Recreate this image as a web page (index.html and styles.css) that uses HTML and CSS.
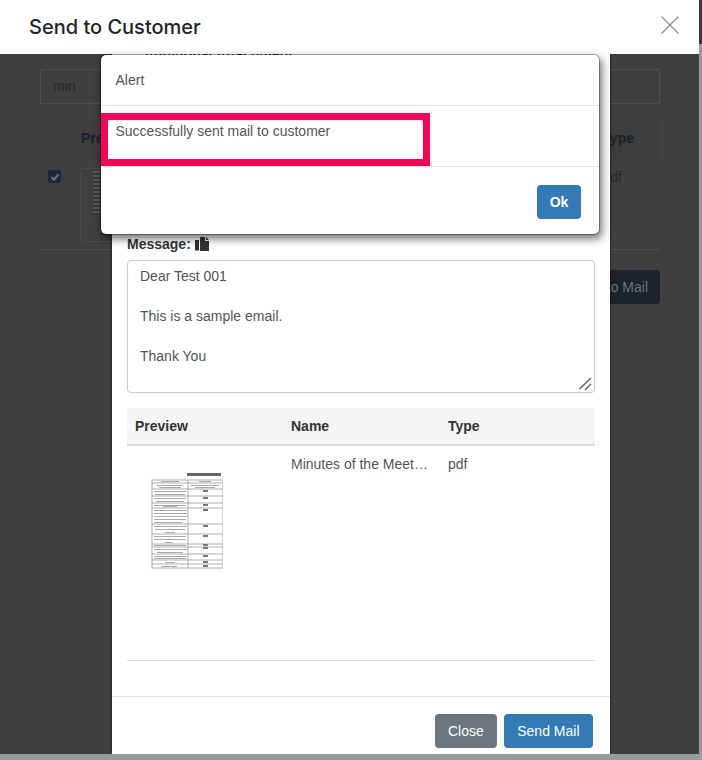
FILE: index.html
```html
<!DOCTYPE html>
<html lang="en">
  <head>
    <meta charset="UTF-8" />
    <title>Send to Customer</title>
    <link rel="stylesheet" href="styles.css">
  </head>
  <body>
    <div class="page">
      <div class="customer-modal">
        <div class="customer-head">
          <h1>Send to Customer</h1>
          <svg class="close-x" width="18" height="18" viewBox="0 0 18 18">
            <path d="M0.5 0.5L17.5 17.5M17.5 0.5L0.5 17.5" stroke="#8a8a8a" stroke-width="1.1" fill="none" />
          </svg>
        </div>

        <div class="customer-body">
          <div class="search-box">min</div>
          <div class="back-head">
            <span class="back-preview">Preview</span>
            <span class="back-type">Type</span>
          </div>
          <div class="back-row">
            <span class="back-check">
              <svg width="10" height="10" viewBox="0 0 10 10">
                <path d="M1.5 5.2L4 7.6L8.6 2.4" stroke="#6f7479" stroke-width="2" fill="none" />
              </svg>
            </span>
            <div class="back-thumb"><div class="back-thumb-page"></div></div>
            <span class="back-pdf">pdf</span>
          </div>
          <div class="back-actions">
            <span class="back-btn">Send to Mail</span>
          </div>
        </div>
      </div>
      <div class="scroll-thumb"></div>

      <div class="mail-modal">
        <div class="mail-top">
          <span class="mail-title">Additional Attachment</span>
        </div>
        <div class="mail-label">Message: <svg width="14" height="14" viewBox="0 0 14 14"><path d="M5 0h5v4h4v10H5z M11 0l3 3h-3z M0 3h4v10.5H0z" fill="#333" /></svg></div>
        <div class="mail-text">
          <p>Dear Test 001</p>
          <p>&nbsp;</p>
          <p>This is a sample email.</p>
          <p>&nbsp;</p>
          <p>Thank You</p>
          <svg class="grip" width="14" height="14" viewBox="0 0 14 14">
            <path d="M0.5 12L12 1M6 13L12 7" stroke="#666" stroke-width="1.5" fill="none" />
          </svg>
        </div>
        <table class="mail-table">
          <thead>
            <tr>
              <th class="col-preview">Preview</th>
              <th class="col-name">Name</th>
              <th>Type</th>
            </tr>
          </thead>
          <tbody>
            <tr>
              <td>
                <svg class="doc-thumb" width="72" height="100" viewBox="0 0 72 100">
                  <rect x="36" y="2" width="34" height="3" fill="#666" />
                  <g fill="none" stroke="#999" stroke-width="0.8">
                    <rect x="1" y="9" width="71" height="88" />
                    <path d="M37 9V97M1 12H72M1 18H72M1 25H72M1 32H72M1 37H72M1 53H72M1 63H72M1 73H72M1 76H72M1 83H72M1 89H72M1 93H72" />
                  </g>
                  <g fill="#aaa">
                    <rect x="10" y="10" width="18" height="1" /><rect x="48" y="10" width="12" height="1" />
                    <rect x="6" y="14" width="26" height="1" /><rect x="40" y="14" width="28" height="1" />
                    <rect x="8" y="16" width="22" height="1" /><rect x="44" y="16" width="20" height="1" />
                    <rect x="3" y="20" width="32" height="1" /><rect x="4" y="23" width="30" height="1" />
                    <rect x="3" y="27" width="32" height="1" /><rect x="5" y="30" width="28" height="1" />
                    <rect x="3" y="34" width="32" height="1" /><rect x="12" y="35" width="14" height="1" />
                    <rect x="3" y="39" width="33" height="1" /><rect x="3" y="42" width="33" height="1" />
                    <rect x="3" y="45" width="33" height="1" /><rect x="3" y="48" width="32" height="1" />
                    <rect x="3" y="51" width="28" height="1" /><rect x="3" y="55" width="33" height="1" />
                    <rect x="4" y="58" width="30" height="1" /><rect x="14" y="61" width="10" height="1" />
                    <rect x="3" y="65" width="32" height="1" /><rect x="3" y="68" width="32" height="1" />
                    <rect x="14" y="71" width="8" height="1" /><rect x="3" y="74" width="32" height="1" />
                    <rect x="3" y="78" width="33" height="1" /><rect x="6" y="81" width="26" height="1" />
                    <rect x="3" y="85" width="33" height="1" /><rect x="3" y="87" width="32" height="1" />
                    <rect x="14" y="91" width="10" height="1" /><rect x="10" y="95" width="16" height="1" />
                  </g>
                  <g fill="#777">
                    <rect x="52" y="19" width="5" height="2" /><rect x="52" y="26" width="5" height="2" />
                    <rect x="52" y="33" width="5" height="2" /><rect x="52" y="38" width="5" height="2" />
                    <rect x="52" y="54" width="5" height="2" /><rect x="52" y="64" width="5" height="2" />
                    <rect x="52" y="73" width="5" height="2" /><rect x="52" y="76" width="5" height="2" />
                    <rect x="52" y="84" width="5" height="2" /><rect x="52" y="90" width="5" height="2" />
                    <rect x="52" y="94" width="5" height="2" />
                  </g>
                </svg>
              </td>
              <td><div class="doc-name">Minutes of the Meeting.pdf</div></td>
              <td>pdf</td>
            </tr>
          </tbody>
        </table>
        <div class="mail-foot">
          <button class="btn btn-grey">Close</button>
          <button class="btn btn-blue">Send Mail</button>
        </div>
      </div>

      <div class="alert-modal">
        <div class="alert-head">Alert</div>
        <div class="alert-body">Successfully sent mail to customer</div>
        <div class="alert-foot">
          <button class="btn btn-blue">Ok</button>
        </div>
        <div class="highlight"></div>
      </div>
    </div>
  </body>
</html>
```

FILE: styles.css
```css
html,
body {
  margin: 0;
  padding: 0;
}
body {
  font-family: "Liberation Sans", Arial, sans-serif;
  font-size: 14px;
  color: #555;
}
.page {
  position: relative;
  width: 702px;
  height: 760px;
  overflow: hidden;
  background-color: #979ba0;
}
.customer-modal {
  width: 699px;
  height: 754px;
  display: flex;
  flex-direction: column;
}
.customer-head {
  height: 54px;
  flex: none;
  background-color: #fff;
  display: flex;
  align-items: center;
  justify-content: space-between;
  padding: 0 20px 0 29px;
  box-sizing: border-box;
}
.customer-head h1 {
  margin: 0;
  font-family: Inter, "Noto Sans", sans-serif;
  font-size: 20px;
  font-weight: 500;
  color: #212529;
}
.close-x {
  margin-top: -5px;
}
.customer-body {
  flex: 1;
  background-color: #3f3f3f;
  padding: 15px 39px 0 40px;
  color: #1c232b;
}
.search-box {
  height: 33px;
  line-height: 33px;
  border: 1px solid #4f4f4f;
  padding-left: 12px;
  font-size: 14px;
  color: #22282e;
}
.back-head {
  margin-top: 17px;
  height: 38px;
  padding-bottom: 3px;
  box-sizing: border-box;
  background-color: #3d3d3d;
  border-bottom: 1px dotted #333;
  display: flex;
  justify-content: space-between;
  align-items: center;
  font-weight: bold;
  color: #16222f;
}
.back-preview {
  margin-left: 41px;
}
.back-type {
  margin-right: 26px;
}
.back-row {
  height: 91px;
  border-bottom: 1px solid #4d4d4d;
  display: flex;
  align-items: flex-start;
  padding-top: 9px;
  box-sizing: border-box;
}
.back-check {
  width: 13px;
  height: 13px;
  margin: 2px 0 0 8px;
  background-color: #1b2a3a;
  border-radius: 2px;
  display: flex;
  align-items: center;
  justify-content: center;
}
.back-thumb {
  width: 80px;
  height: 72px;
  margin-left: 19px;
  border: 1px solid #4a4a4a;
  border-radius: 3px;
}
.back-thumb-page {
  width: 7px;
  height: 45px;
  margin: 1px 0 0 12px;
  background: repeating-linear-gradient(0deg, #363a3e 0, #363a3e 2px, #565b60 2px, #565b60 4px);
}
.back-pdf {
  margin-left: auto;
  margin-right: 38px;
  padding-top: 1px;
  color: #22282e;
}
.back-actions {
  margin-top: 20px;
  display: flex;
  justify-content: flex-end;
}
.back-btn {
  height: 34px;
  line-height: 34px;
  padding: 0 12px;
  border-radius: 4px;
  background-color: #1c232b;
  color: #6f7479;
}
.scroll-thumb {
  position: absolute;
  top: 0;
  right: 0;
  width: 3px;
  height: 44px;
  background-color: #3a3a3a;
}
.mail-modal {
  position: absolute;
  top: 54px;
  left: 112px;
  width: 498px;
  height: 700px;
  background-color: #fff;
  box-shadow: 0 0 3px rgba(0, 0, 0, 0.6);
  clip-path: inset(0 -4px);
}
.mail-top {
  height: 174px;
  overflow: hidden;
  padding-left: 32px;
  font-weight: bold;
  color: #333;
}
.mail-title {
  display: block;
  margin-top: -8px;
  line-height: 16px;
}
.mail-label {
  margin: 8px 0 0 15px;
  height: 16px;
  line-height: 16px;
  font-weight: bold;
  color: #333;
  display: flex;
  align-items: center;
  gap: 4px;
}
.mail-text {
  position: relative;
  margin: 8px 15px 0;
  height: 133px;
  box-sizing: border-box;
  border: 1px solid #ccc;
  border-radius: 4px;
  padding: 5px 12px;
  line-height: 20px;
}
.mail-text p {
  margin: 0;
}
.grip {
  position: absolute;
  right: 1px;
  bottom: 1px;
}
.mail-table {
  border-collapse: collapse;
  table-layout: fixed;
  width: 468px;
  margin: 15px 15px 0;
}
.mail-table th {
  height: 37px;
  padding: 0 8px 1px;
  box-sizing: border-box;
  text-align: left;
  color: #333;
  background-color: #f5f5f5;
  border-bottom: 2px solid #ddd;
}
.col-preview {
  width: 156px;
}
.col-name {
  width: 157px;
}
.mail-table td {
  height: 215px;
  padding: 10px 8px;
  vertical-align: top;
  box-sizing: border-box;
  border-bottom: 1px solid #ddd;
}
.doc-name {
  width: 138px;
  white-space: nowrap;
  overflow: hidden;
  text-overflow: ellipsis;
}
.doc-thumb {
  display: block;
  margin: 15px 0 0 16px;
  filter: blur(0.4px);
}
.mail-foot {
  margin-top: 35px;
  border-top: 1px solid #e5e5e5;
  padding: 17px 17px 0;
  display: flex;
  justify-content: flex-end;
  gap: 7px;
}
.btn {
  height: 34px;
  padding: 0 13px;
  border: none;
  border-radius: 4px;
  color: #fff;
  font-family: "Liberation Sans", Arial, sans-serif;
  font-size: 14px;
}
.btn-grey {
  background-color: #6c757d;
}
.btn-blue {
  background-color: #337ab7;
}
.mail-foot .btn-blue {
  padding: 0 13.5px;
}
.alert-modal {
  position: absolute;
  top: 54px;
  left: 100px;
  width: 500px;
  height: 181px;
  box-sizing: border-box;
  background-color: #fff;
  background-clip: padding-box;
  border: 1px solid rgba(0, 0, 0, 0.3);
  border-radius: 6px;
  box-shadow: 2px 4px 9px rgba(0, 0, 0, 0.55);
}
.alert-head {
  height: 50px;
  line-height: 50px;
  padding-left: 14.5px;
  border-bottom: 1px solid #e5e5e5;
}
.alert-body {
  height: 61px;
  padding: 15px 14.5px 0;
  box-sizing: border-box;
  border-bottom: 1px solid #e5e5e5;
  line-height: 20px;
}
.alert-foot {
  padding-top: 18px;
  padding-right: 18px;
  display: flex;
  justify-content: flex-end;
}
.alert-foot .btn {
  width: 44px;
  padding: 0;
  font-weight: bold;
}
.highlight {
  position: absolute;
  top: 58px;
  left: 0;
  width: 329px;
  height: 53px;
  box-sizing: border-box;
  border: 7px solid #ff0055;
}
```
